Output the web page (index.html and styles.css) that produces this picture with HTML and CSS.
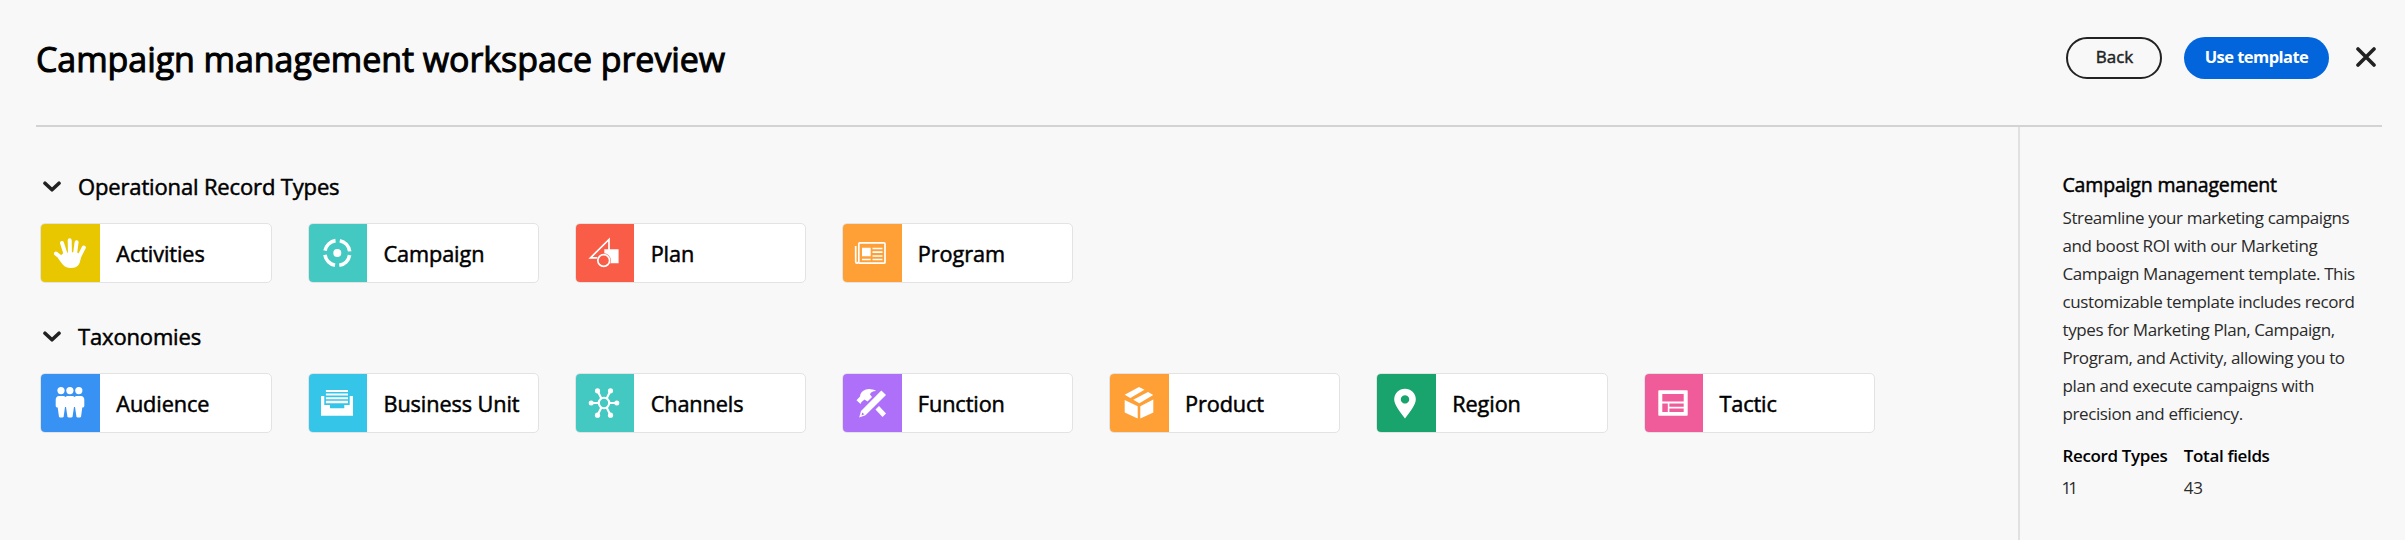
FILE: index.html
```html
<!DOCTYPE html>
<html lang="en">
<head>
<meta charset="utf-8">
<title>Campaign management workspace preview</title>
<link rel="stylesheet" href="styles.css">
</head>
<body>
<div class="page">
  <header class="header">
    <h1 class="title">Campaign management workspace preview</h1>
    <div class="actions">
      <button class="btn btn-outline">Back</button>
      <button class="btn btn-primary">Use template</button>
      <button class="close" aria-label="Close"><svg width="20" height="20" viewBox="0 0 20 20"><path d="M2 2 18 18M18 2 2 18"/></svg></button>
    </div>
  </header>
  <div class="body">
    <main class="main">
      <section class="group">
        <h2 class="group-title"><svg class="chevron" width="18" height="12" viewBox="0 0 18 12"><path d="M2 2.2 9 8.8 16 2.2"/></svg>Operational Record Types</h2>
        <div class="cards">
          <div class="card"><div class="tile yellow"><svg viewBox="0 0 59 58"><g fill="none" stroke="#fff" stroke-linecap="round" stroke-width="4"><path d="M29.7 16.2 30 32M22 19l4.5 14M36.6 18.2 34.6 33M43.8 23.5 38 35M16 29.6l8 6.4"/></g><path d="M23.5 29 36 28l5 2.500C40.500 38 40 44 30.500 44 24.500 44 22 40 18 34Z"/></svg></div><span class="name">Activities</span></div>
          <div class="card"><div class="tile teal"><svg viewBox="0 0 59 58"><circle cx="29.300" cy="29" r="12.500" fill="none" stroke="#fff" stroke-width="3.600" stroke-dasharray="15.235 4.400" stroke-dashoffset="-2.200"/><circle cx="29.300" cy="29" r="4"/></svg></div><span class="name">Campaign</span></div>
          <div class="card"><div class="tile red"><svg viewBox="0 0 59 58"><path d="M34 26V15.500L15.500 33.800H24" fill="none" stroke="#fff" stroke-width="1.700"/><path d="M29.300 25.300H43.600V39.300H29.300Z"/><circle class="red-fill" cx="28.700" cy="36.500" r="7.200"/><circle class="red-fill" cx="28.700" cy="36.500" r="5.900" stroke="#fff" stroke-width="1.700"/></svg></div><span class="name">Plan</span></div>
          <div class="card"><div class="tile orange"><svg viewBox="0 0 59 58"><g fill="none" stroke="#fff" stroke-width="1.700"><path d="M16.800 39.200H42Q43 39.200 43 38.200V19.800Q43 18.800 42 18.800H17.800Q16.800 18.800 16.800 19.800V37Q16.800 39.200 15 39.200 13.700 39.200 13.700 37.500V22"/><path d="M30.500 24.500h10M30.500 28.200h10M30.500 32h10M30.500 35.500h10M20 35.500h8.700"/></g><path d="M20 23.700h8.700v8.600H20z"/></svg></div><span class="name">Program</span></div>
        </div>
      </section>
      <section class="group">
        <h2 class="group-title"><svg class="chevron" width="18" height="12" viewBox="0 0 18 12"><path d="M2 2.2 9 8.8 16 2.2"/></svg>Taxonomies</h2>
        <div class="cards">
          <div class="card"><div class="tile blue"><svg viewBox="0 0 59 58"><circle cx="21" cy="16.600" r="3.600"/><circle cx="29.900" cy="16.600" r="3.600"/><circle cx="38.800" cy="16.600" r="3.600"/><path d="M19 22H24L25.500 23 27 22H33L34.500 23 36 22H41Q44.300 22.300 44.300 26V32Q44.300 33.500 42.300 33.500L41 43Q38.700 44 36.500 43L35 33 34 33 32.500 43Q30 44 27.500 43L26 33H25L23.600 43Q21.300 44 19 43L17.700 33.500Q15.700 33.500 15.700 32V26Q15.700 22.300 19 22Z"/></svg></div><span class="name">Audience</span></div>
          <div class="card"><div class="tile cyan"><svg viewBox="0 0 59 58"><path d="M13 22H16.300V31H22V34.300H36.300V31H41.700V22H45V41.700H13Z"/><path d="M17.900 16H40V18H17.900ZM17.900 19.600H40V21.600H17.900ZM17.900 23.200H40V25.200H17.900ZM17.900 26.800H40V29.300H17.900Z"/></svg></div><span class="name">Business Unit</span></div>
          <div class="card"><div class="tile teal"><svg viewBox="0 0 59 58"><g fill="none" stroke="#fff" stroke-width="2.100"><circle cx="29" cy="29" r="5.200"/><path d="M16 29H24M34 29H42M22.500 16.700 26.400 24.500M35.500 16.700 31.600 24.500M22.500 41.300 26.400 33.500M35.500 41.300 31.600 33.500"/></g><circle cx="16.200" cy="29" r="2.500"/><circle cx="41.800" cy="29" r="2.500"/><circle cx="22.500" cy="16.800" r="2.600"/><circle cx="35.500" cy="16.800" r="2.600"/><circle cx="22.500" cy="41.200" r="2.600"/><circle cx="35.500" cy="41.200" r="2.600"/></svg></div><span class="name">Channels</span></div>
          <div class="card"><div class="tile purple"><svg viewBox="0 0 59 58"><path d="M14.500 26.300 18 22.500C18.500 17.500 23.500 14.500 28.500 15.200 31 15.300 33 16 34 17 30.500 17.200 28.500 18 28 20.500L30 23 25.500 27.500 22.500 25.500 19.500 28 18.500 30Z"/><path d="M33.500 35.500 37 32 44 39.500 40.500 43Z"/><path d="M39.300 16.500 44 21 23.500 41.300 17.200 43.400 19 37Z"/><path class="purple-fill" d="M20.200 38.400 22.300 40.300 19.500 41.500Z"/></svg></div><span class="name">Function</span></div>
          <div class="card"><div class="tile orange"><svg viewBox="0 0 59 58"><path d="M15.700 26 28.700 32.300V44.500L15.700 38.500ZM31.300 32.300 44.300 25.500V38.500L31.300 44.500ZM15.700 20.700 30 13 35.500 15.700 21.300 24ZM24.300 25.700 39 18 44.300 21 30.300 29.300Z"/></svg></div><span class="name">Product</span></div>
          <div class="card"><div class="tile green"><svg viewBox="0 0 59 58"><path fill-rule="evenodd" d="M29 14.700A10.800 10.800 0 0 1 39.800 25.500C39.800 31 34 37.500 29 44.600 24 37.500 18.200 31 18.200 25.500A10.800 10.800 0 0 1 29 14.700ZM29 21.200a4.200 4.200 0 1 0 .01 0Z"/></svg></div><span class="name">Region</span></div>
          <div class="card"><div class="tile pink"><svg viewBox="0 0 59 58"><path fill-rule="evenodd" d="M15 16.300H43Q43.700 16.300 43.700 17V41Q43.700 41.700 43 41.700H15Q14.300 41.700 14.300 41V17Q14.300 16.300 15 16.300ZM18.300 20V27.400H39.700V20ZM18.300 29.400V38H23.800V29.400ZM25.400 29.400V32.800H39.700V29.400ZM25.400 34.600V38H39.700V34.600Z"/></svg></div><span class="name">Tactic</span></div>
        </div>
      </section>
    </main>
    <aside class="side">
      <h3 class="side-title">Campaign management</h3>
      <p class="desc">Streamline your marketing campaigns<br>and boost ROI with our Marketing<br>Campaign Management template. This<br>customizable template includes record<br>types for Marketing Plan, Campaign,<br>Program, and Activity, allowing you to<br>plan and execute campaigns with<br>precision and efficiency.</p>
      <dl class="stats">
        <div><dt>Record Types</dt><dd class="eleven">11</dd></div>
        <div><dt>Total fields</dt><dd>43</dd></div>
      </dl>
    </aside>
  </div>
</div>
</body>
</html>
```
FILE: styles.css
```css
* { box-sizing: border-box; }
body { margin: 0; background: #f8f8f8; color: #000; font-family: "Open Sans", "Noto Sans", sans-serif; }
h1, h2, h3, p, dl, dd { margin: 0; }
.page { height: 540px; padding: 0 23px 0 36px; display: flex; flex-direction: column; overflow: hidden; }
.header { height: 127px; flex: none; border-bottom: 2px solid #d3d3d3; display: flex; justify-content: space-between; align-items: flex-start; padding-top: 37px; }
.title { font-size: 34px; line-height: 44px; font-weight: 500; letter-spacing: -.07px; -webkit-text-stroke: 1px; white-space: nowrap; }
.actions { display: flex; align-items: flex-start; padding-right: 6px; }
.btn { height: 42px; border-radius: 21px; font-family: inherit; white-space: nowrap; }
.btn-outline { width: 96px; margin-right: 22px; border: 2px solid #222; background: transparent; color: #222; font-size: 17px; font-weight: 500; -webkit-text-stroke: .45px; line-height: 34px; padding: 0 0 3px 1px; }
.btn-primary { width: 145px; margin-right: 27px; border: 0; background: #0265dc; color: #fff; font-size: 16.500px; font-weight: 700; letter-spacing: -.55px; line-height: 38px; padding: 0 0 2px; }
.close { width: 20px; height: 20px; margin-top: 10px; padding: 0; border: 0; background: none; }
.close svg { display: block; }
.close path, .chevron path { fill: none; stroke: #222; stroke-width: 3.6; stroke-linecap: round; stroke-linejoin: round; }
.body { flex: 1; display: flex; min-height: 0; }
.main { flex: 1; padding: 41px 0 0 4.4px; }
.group { height: 150px; }
.group-title { height: 37px; padding: 0 0 0 2.6px; margin-bottom: 18px; display: flex; align-items: center; font-size: 22px; line-height: 37px; font-weight: 500; letter-spacing: -.15px; -webkit-text-stroke: .5px; white-space: nowrap; }
.chevron { margin-right: 17px; flex: none; }
.cards { display: flex; gap: 36px; }
.card { width: 231.2px; height: 60px; flex: none; border: 1px solid #e3e3e3; border-radius: 5px; background: #fff; display: flex; align-items: center; overflow: hidden; }
.tile { width: 59.6px; height: 60px; margin-left: -1px; flex: none; padding: 1px 0; }
.tile svg { display: block; width: 59px; height: 58px; fill: #fff; }
.name { padding: 1.5px 0 0 16.3px; font-size: 21.700px; line-height: 58px; font-weight: 500; letter-spacing: -.1px; -webkit-text-stroke: .5px; white-space: nowrap; }
.yellow { background: #e8c600; }
.teal { background: #44c9c2; }
.red { background: #f95d48; }
.red-fill { fill: #f95d48; }
.orange { background: #ffa037; }
.blue { background: #3892f3; }
.cyan { background: #35c5e9; }
.purple { background: #ae70f9; }
.purple-fill { fill: #ae70f9; }
.green { background: #19a46e; }
.pink { background: #f05b9a; }
.side { width: 364px; flex: none; border-left: 2px solid #e1e1e1; padding: 43.5px 0 0 42.5px; white-space: nowrap; }
.side-title { font-size: 19.500px; line-height: 28px; font-weight: 500; letter-spacing: -.17px; -webkit-text-stroke: .5px; }
.desc { margin-top: 5.500px; font-size: 17px; line-height: 28px; letter-spacing: -.4px; color: #2a2a2a; }
.stats { display: flex; gap: 16.5px; margin-top: 14px; font-size: 17px; line-height: 28px; }
.stats dt { font-weight: 600; letter-spacing: -.36px; }
.stats dd { margin-top: 4px; letter-spacing: -.4px; color: #2a2a2a; }
.stats .eleven { margin-left: -1px; letter-spacing: -3px; }
```
